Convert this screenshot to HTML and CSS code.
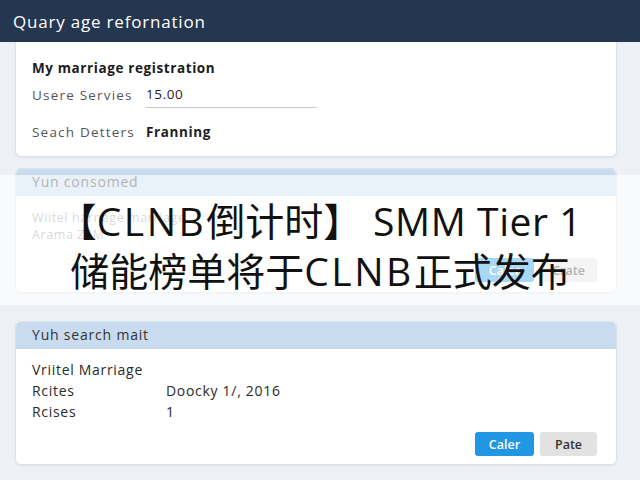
FILE: index.html
```html
<!DOCTYPE html>
<html lang="zh">
<head>
<meta charset="utf-8">
<title>Quary age refornation</title>
<link rel="stylesheet" href="styles.css">
</head>
<body>
<header class="topbar">
  <h1 class="topbar-title">Quary age refornation</h1>
</header>
<main class="content">
  <section class="card card-first">
    <div class="card-body">
      <h2 class="card-heading">My marriage registration</h2>
      <div class="field">
        <span class="label">Usere Servies</span>
        <span class="value value-input">15.00</span>
      </div>
      <div class="field field-last">
        <span class="label">Seach Detters</span>
        <span class="value value-bold">Franning</span>
      </div>
    </div>
  </section>

  <section class="card card-second">
    <div class="card-header">Yun consomed</div>
    <div class="card-body body-second">
      <div class="muted-line">Wiitel harnage marriage</div>
      <div class="muted-line">Arama ZEM</div>
      <div class="actions">
        <button class="btn btn-primary">Caler</button>
        <button class="btn btn-secondary">Crate</button>
      </div>
    </div>
  </section>

  <section class="card card-third">
    <div class="card-header">Yuh search mait</div>
    <div class="card-body body-third">
      <div class="line-title">Vriitel Marriage</div>
      <div class="row"><span class="row-label">Rcites</span><span class="row-value">Doocky 1/, 2016</span></div>
      <div class="row"><span class="row-label">Rcises</span><span class="row-value">1</span></div>
      <div class="actions actions-third">
        <button class="btn btn-primary">Caler</button>
        <button class="btn btn-secondary">Pate</button>
      </div>
    </div>
  </section>
</main>

<div class="banner">
  <p class="banner-line">【<span class="latin latin-wide">CLNB</span>倒计时】<span class="latin"> SMM Tier 1</span></p>
  <p class="banner-line">储能榜单将于<span class="latin latin-wide">CLNB</span>正式发布</p>
</div>
</body>
</html>
```

FILE: styles.css
```css
* { box-sizing: border-box; }

html, body {
  margin: 0;
  padding: 0;
}

body {
  width: 640px;
  height: 480px;
  overflow: hidden;
  background: #edf1f5;
  font-family: "Open Sans", "Liberation Sans", sans-serif;
  color: #222;
  position: relative;
}

.topbar {
  height: 42px;
  background: #253650;
  display: flex;
  align-items: center;
  padding-left: 13px;
}

.topbar-title {
  margin: 0;
  font-size: 17px;
  font-weight: 400;
  color: #ffffff;
  letter-spacing: 0.8px;
}

.content {
  padding: 0 23px 0 15px;
  display: flex;
  flex-direction: column;
}

.card {
  background: #ffffff;
  border: 1px solid #dde3ea;
  border-radius: 6px;
  box-shadow: 0 1px 2px rgba(0, 0, 0, 0.05);
  overflow: hidden;
}

.card-first {
  border-top: none;
  border-top-left-radius: 0;
  border-top-right-radius: 0;
  height: 115px;
}

.card-second {
  margin-top: 11px;
  height: 125px;
}

.card-third {
  margin-top: 28px;
  height: 144px;
}

.card-header {
  height: 27px;
  background: #c9dcef;
  display: flex;
  align-items: center;
  padding-left: 16px;
  padding-bottom: 2px;
  font-size: 14px;
  letter-spacing: 0.8px;
  color: #333;
}

.card-body {
  padding: 0 16px;
}

.card-heading {
  margin: 0;
  padding-top: 17px;
  font-size: 13.5px;
  font-weight: 700;
  color: #1c1c1c;
  line-height: 18px;
  letter-spacing: 0.6px;
}

.field {
  display: flex;
  align-items: center;
  margin-top: 8px;
  font-size: 13.5px;
  line-height: 18px;
  letter-spacing: 0.6px;
}

.field-last {
  margin-top: 15px;
}

.label {
  width: 114px;
  color: #555;
  padding-bottom: 4px;
  letter-spacing: 1.2px;
}

.field-last .label {
  padding-bottom: 0;
}

.value {
  color: #1e1e1e;
}

.value-input {
  width: 171px;
  padding-bottom: 4px;
  border-bottom: 1px solid #c5c9ce;
}

.value-bold {
  font-weight: 700;
}

.body-second {
  padding-top: 13px;
}

.muted-line {
  font-size: 12.5px;
  line-height: 17px;
  color: #9a9a9a;
  letter-spacing: 0.6px;
}

.actions {
  display: flex;
  justify-content: flex-end;
  gap: 6px;
  padding-right: 3px;
}

.body-second .actions {
  margin-top: 15px;
}

.btn {
  font-family: "Open Sans", "Liberation Sans", sans-serif;
  font-size: 12.5px;
  font-weight: 600;
  border: none;
  border-radius: 3px;
  height: 24px;
  padding: 0;
  cursor: pointer;
}

.btn-primary {
  width: 59px;
  background: #2196e3;
  color: #ffffff;
}

.btn-secondary {
  width: 57px;
  background: #e2e2e2;
  color: #333;
}

.body-third {
  padding-top: 10px;
}

.line-title {
  font-size: 14px;
  line-height: 21px;
  color: #2a2a2a;
  letter-spacing: 0.7px;
}

.row {
  display: flex;
  font-size: 14px;
  line-height: 21px;
  color: #2a2a2a;
  letter-spacing: 0.7px;
}

.row-label {
  width: 134px;
}

.actions-third {
  margin-top: 10px;
}

.banner {
  position: absolute;
  left: 0;
  right: 0;
  top: 175px;
  height: 130px;
  background: rgba(255, 255, 255, 0.62);
  padding-top: 20px;
  text-align: center;
}

.banner-line {
  margin: 0;
  font-family: "Noto Sans CJK SC", "Noto Sans", sans-serif;
  font-size: 39px;
  font-weight: 400;
  line-height: 48px;
  color: #111;
}

.latin {
  font-family: "Open Sans", "Noto Sans", sans-serif;
  letter-spacing: 0.6px;
}

.latin-wide {
  letter-spacing: 2.5px;
}
```
